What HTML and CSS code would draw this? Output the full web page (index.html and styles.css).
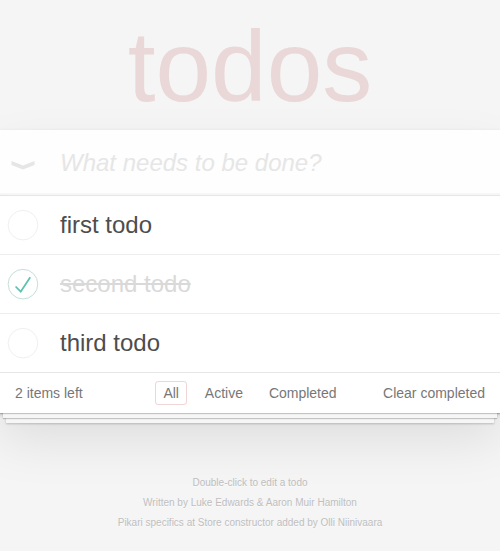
FILE: index.html
```html
<!DOCTYPE html>
<html lang="en">
<head>
<meta charset="utf-8">
<title>Todos</title>
<link rel="stylesheet" href="styles.css">
</head>
<body>
<h1 class="title">todos</h1>
<section class="todoapp">
  <header class="header">
    <span class="toggle-all">
      <svg width="46" height="65" viewBox="0 0 46 65"><polygon points="11.5,31 23,35.5 34.5,31 34.5,35 23,39.5 11.5,35" fill="#e6e6e6"/></svg>
    </span>
    <input class="new-todo" placeholder="What needs to be done?">
  </header>
  <section class="main">
    <ul class="todo-list">
      <li class="todo">
        <svg class="toggle" width="40" height="40" viewBox="-10 -18 100 135"><circle cx="50" cy="50" r="50" fill="none" stroke="#ededed" stroke-width="3"/></svg>
        <label class="todo-label">first todo</label>
      </li>
      <li class="todo completed">
        <svg class="toggle" width="40" height="40" viewBox="-10 -18 100 135"><circle cx="50" cy="50" r="50" fill="none" stroke="#bddad5" stroke-width="3"/><path fill="#5dc2af" d="M72 25L42 71 27 56l-4 4 20 20 34-52z"/></svg>
        <label class="todo-label">second todo</label>
      </li>
      <li class="todo">
        <svg class="toggle" width="40" height="40" viewBox="-10 -18 100 135"><circle cx="50" cy="50" r="50" fill="none" stroke="#ededed" stroke-width="3"/></svg>
        <label class="todo-label">third todo</label>
      </li>
    </ul>
  </section>
  <footer class="footer">
    <span class="todo-count">2 items left</span>
    <ul class="filters">
      <li><a class="filter selected">All</a></li>
      <li><a class="filter">Active</a></li>
      <li><a class="filter">Completed</a></li>
    </ul>
    <div class="clear-wrap"><button class="clear-completed">Clear completed</button></div>
  </footer>
</section>
<footer class="info">
  <p>Double-click to edit a todo</p>
  <p>Written by Luke Edwards &amp; Aaron Muir Hamilton</p>
  <p>Pikari specifics at Store constructor added by Olli Niinivaara</p>
</footer>
</body>
</html>
```
FILE: styles.css
```css
html, body {
  margin: 0;
  padding: 0;
}
body {
  font: 14px "Liberation Sans", Arial, Helvetica, sans-serif;
  line-height: 1.4em;
  background: #f5f5f5;
  color: #4d4d4d;
  -webkit-font-smoothing: antialiased;
}
.title {
  margin: 0 0 14px 0;
  padding-top: 16px;
  height: 100px;
  font-size: 100px;
  line-height: 100px;
  font-weight: normal;
  text-align: center;
  color: rgba(175, 47, 47, 0.15);
}
.todoapp {
  position: relative;
  background: #fff;
  margin: 0 0 40px 0;
  box-shadow: 0 2px 4px 0 rgba(0, 0, 0, 0.2), 0 25px 50px 0 rgba(0, 0, 0, 0.1);
}
.header {
  display: flex;
  align-items: stretch;
  height: 65px;
  background: rgba(0, 0, 0, 0.003);
  box-shadow: inset 0 -2px 1px rgba(0, 0, 0, 0.03);
}
.toggle-all {
  width: 60px;
  flex: none;
  display: flex;
}
.new-todo {
  flex: 1;
  min-width: 0;
  border: none;
  outline: none;
  background: transparent;
  padding: 16px 16px 16px 0;
  font: 24px "Liberation Sans", Arial, sans-serif;
  line-height: 33px;
  color: #4d4d4d;
}
.new-todo::placeholder {
  font-style: italic;
  color: #e6e6e6;
}
.main {
  border-top: 1px solid #e6e6e6;
}
.todo-list {
  margin: 0;
  padding: 0;
  list-style: none;
}
.todo {
  display: flex;
  align-items: center;
  border-bottom: 1px solid #ededed;
  font-size: 24px;
}
.todo:last-child {
  border-bottom: none;
}
.toggle {
  flex: none;
  display: block;
}
.todo-label {
  padding: 15px 15px 15px 20px;
  line-height: 28px;
  color: #4d4d4d;
}
.completed .todo-label {
  color: #d9d9d9;
  text-decoration: line-through;
}
.footer {
  position: relative;
  display: grid;
  grid-template-columns: 1fr auto 1fr;
  align-items: center;
  padding: 10px 15px;
  height: 20px;
  color: #777;
  border-top: 1px solid #e6e6e6;
}
.footer::before {
  content: '';
  position: absolute;
  right: 0;
  bottom: 0;
  left: 0;
  height: 50px;
  overflow: hidden;
  box-shadow: 0 1px 1px rgba(0, 0, 0, 0.2),
              0 8px 0 -3px #f6f6f6,
              0 9px 1px -3px rgba(0, 0, 0, 0.2),
              0 16px 0 -6px #f6f6f6,
              0 17px 2px -6px rgba(0, 0, 0, 0.2);
}
.todo-count {
  text-align: left;
  line-height: 20px;
}
.filters {
  margin: 0;
  padding: 0;
  list-style: none;
  text-align: center;
  white-space: nowrap;
}
.filters li {
  display: inline;
}
.filter {
  color: inherit;
  margin: 3px;
  padding: 3px 7px;
  border: 1px solid transparent;
  border-radius: 3px;
}
.filter.selected {
  border-color: rgba(175, 47, 47, 0.2);
}
.clear-wrap {
  text-align: right;
}
.clear-completed {
  margin: 0;
  padding: 0;
  border: 0;
  background: none;
  font: inherit;
  color: inherit;
  line-height: 20px;
}
.info {
  margin: 65px auto 0;
  color: #bfbfbf;
  font-size: 10px;
  text-shadow: 0 1px 0 rgba(255, 255, 255, 0.5);
  text-align: center;
}
.info p {
  line-height: 1;
  margin: 10px 0;
}
```
